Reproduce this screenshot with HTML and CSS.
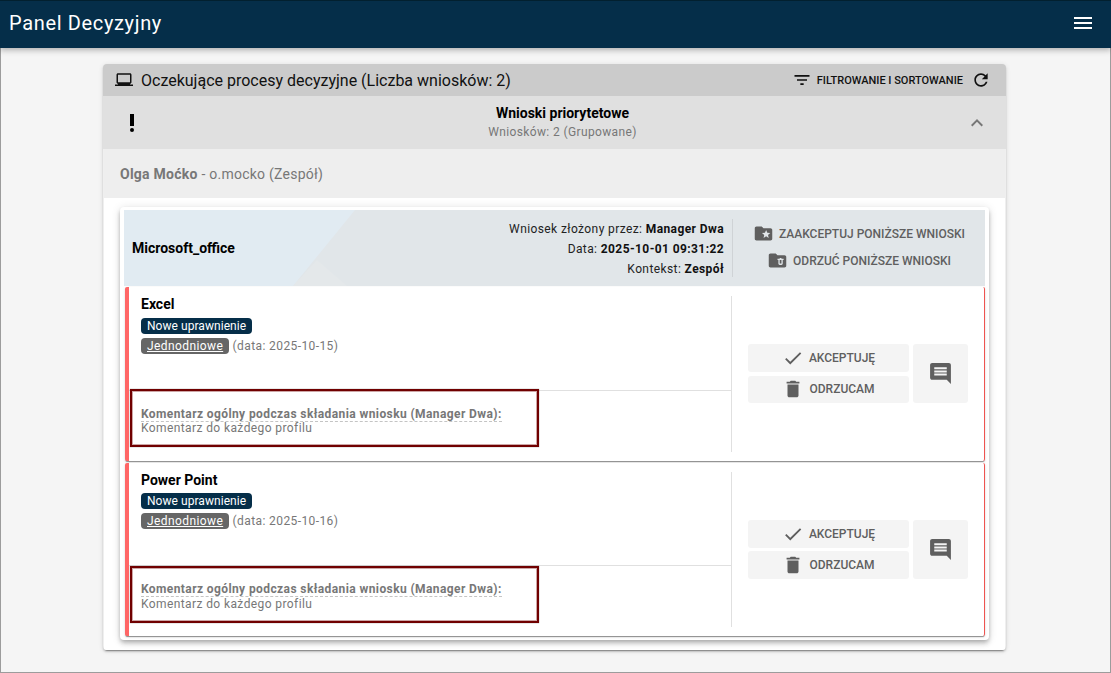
FILE: index.html
```html
<!DOCTYPE html>
<html lang="pl">
<head>
<meta charset="utf-8">
<title>Panel Decyzyjny</title>
<link rel="stylesheet" href="styles.css">
</head>
<body>
<div class="window">
  <header class="topbar">
    <span class="app-title">Panel Decyzyjny</span>
    <svg class="menu-icon" viewBox="0 0 24 24"><path d="M3 18h18v-2H3v2zm0-5h18v-2H3v2zm0-7v2h18V6H3z"/></svg>
  </header>
  <main class="content">
    <section class="panel">
      <div class="panel-head">
        <svg class="icon-18" viewBox="0 0 24 24"><path d="M20 18v-1c1.100 0 1.990-.9 1.990-2L22 5c0-1.100-.9-2-2-2H4c-1.100 0-2 .9-2 2v10c0 1.100.9 2 2 2v1H0v2h24v-2h-4zM4 5h16v10H4V5z"/></svg>
        <h1 class="panel-title">Oczekujące procesy decyzyjne (Liczba wniosków: 2)</h1>
        <svg class="icon-20 filter-icon" viewBox="0 0 24 24"><path d="M10 18h4v-2h-4v2zM3 6v2h18V6H3zm3 7h12v-2H6v2z"/></svg>
        <span class="filter-label">FILTROWANIE I SORTOWANIE</span>
        <svg class="icon-20 refresh-icon" viewBox="0 0 24 24"><path d="M17.650 6.350C16.200 4.900 14.210 4 12 4c-4.420 0-7.990 3.580-7.990 8s3.570 8 7.990 8c3.730 0 6.840-2.550 7.730-6h-2.080c-.82 2.330-3.040 4-5.650 4-3.310 0-6-2.690-6-6s2.690-6 6-6c1.660 0 3.140.69 4.220 1.780L13 11h7V4l-2.350 2.350z"/></svg>
      </div>
      <div class="priority">
        <svg class="priority-icon" viewBox="0 0 24 24"><circle cx="12" cy="19" r="2"/><path d="M10 3h4v12h-4z"/></svg>
        <div class="priority-text">
          <div class="priority-title">Wnioski priorytetowe</div>
          <div class="priority-sub">Wniosków: 2 (Grupowane)</div>
        </div>
        <svg class="chevron" viewBox="0 0 24 24"><path d="M12 8l-6 6 1.410 1.410L12 10.830l4.590 4.580L18 14z"/></svg>
      </div>
      <div class="person"><b>Olga Moćko</b> - o.mocko (Zespół)</div>
      <div class="panel-body">
        <div class="request">
          <div class="request-head">
            <div class="request-name">Microsoft_office</div>
            <div class="request-meta">
              <div>Wniosek złożony przez: <b>Manager Dwa</b></div>
              <div>Data: <b>2025-10-01 09:31:22</b></div>
              <div>Kontekst: <b>Zespół</b></div>
            </div>
            <div class="bulk">
              <button class="bulk-btn"><svg class="icon-21" viewBox="0 0 24 24"><path d="M20 6h-8l-2-2H4c-1.100 0-1.990.9-1.990 2L2 18c0 1.100.9 2 2 2h16c1.100 0 2-.9 2-2V8c0-1.100-.9-2-2-2zm-2.060 11L15 15.280 12.060 17l.78-3.330-2.590-2.240 3.410-.29L15 8l1.340 3.140 3.410.29-2.590 2.240.78 3.330z"/></svg>ZAAKCEPTUJ PONIŻSZE WNIOSKI</button>
              <button class="bulk-btn"><svg class="icon-21" viewBox="0 0 24 24"><path fill-rule="evenodd" d="M22 8v10c0 1.100-.9 2-2 2H4c-1.100 0-2-.9-2-2L2.010 6C2.010 4.900 2.900 4 4 4h6l2 2h8c1.100 0 2 .9 2 2zM16.500 10V9h-2v1H12v1.500h1v4c0 .83.67 1.500 1.500 1.500h2c.83 0 1.500-.67 1.500-1.500v-4h1V10h-2.500zM16.500 15.500h-2v-4h2v4z"/></svg>ODRZUĆ PONIŻSZE WNIOSKI</button>
            </div>
          </div>

          <article class="item">
            <div class="item-main">
              <div class="item-info">
                <div class="item-name">Excel</div>
                <div class="tag-row"><span class="tag tag-new">Nowe uprawnienie</span></div>
                <div class="tag-row"><span class="tag tag-once">Jednodniowe</span> <span class="tag-date">(data: 2025-10-15)</span></div>
              </div>
              <div class="item-comment">
                <div class="comment-box">
                  <div class="comment-label"><span>Komentarz ogólny podczas składania wniosku (Manager Dwa):</span></div>
                  <div class="comment-text">Komentarz do każdego profilu</div>
                </div>
              </div>
            </div>
            <div class="item-actions">
              <div class="decide">
                <button class="act-btn"><svg class="icon-22" viewBox="0 0 24 24"><path d="M9 16.200L4.800 12l-1.400 1.400L9 19 21 7l-1.400-1.400L9 16.200z"/></svg>AKCEPTUJĘ</button>
                <button class="act-btn"><svg class="icon-22" viewBox="0 0 24 24"><path d="M6 19c0 1.100.9 2 2 2h8c1.100 0 2-.9 2-2V7H6v12zM19 4h-3.500l-1-1h-5l-1 1H5v2h14V4z"/></svg>ODRZUCAM</button>
              </div>
              <button class="note-btn"><svg class="icon-25" viewBox="0 0 24 24"><path d="M21.990 4c0-1.100-.89-2-1.990-2H4c-1.100 0-2 .9-2 2v12c0 1.100.9 2 2 2h14l4 4-.01-18zM18 14H6v-2h12v2zm0-3H6V9h12v2zm0-3H6V6h12v2z"/></svg></button>
            </div>
          </article>

          <article class="item">
            <div class="item-main">
              <div class="item-info">
                <div class="item-name">Power Point</div>
                <div class="tag-row"><span class="tag tag-new">Nowe uprawnienie</span></div>
                <div class="tag-row"><span class="tag tag-once">Jednodniowe</span> <span class="tag-date">(data: 2025-10-16)</span></div>
              </div>
              <div class="item-comment">
                <div class="comment-box">
                  <div class="comment-label"><span>Komentarz ogólny podczas składania wniosku (Manager Dwa):</span></div>
                  <div class="comment-text">Komentarz do każdego profilu</div>
                </div>
              </div>
            </div>
            <div class="item-actions">
              <div class="decide">
                <button class="act-btn"><svg class="icon-22" viewBox="0 0 24 24"><path d="M9 16.200L4.800 12l-1.400 1.400L9 19 21 7l-1.400-1.400L9 16.200z"/></svg>AKCEPTUJĘ</button>
                <button class="act-btn"><svg class="icon-22" viewBox="0 0 24 24"><path d="M6 19c0 1.100.9 2 2 2h8c1.100 0 2-.9 2-2V7H6v12zM19 4h-3.500l-1-1h-5l-1 1H5v2h14V4z"/></svg>ODRZUCAM</button>
              </div>
              <button class="note-btn"><svg class="icon-25" viewBox="0 0 24 24"><path d="M21.990 4c0-1.100-.89-2-1.990-2H4c-1.100 0-2 .9-2 2v12c0 1.100.9 2 2 2h14l4 4-.01-18zM18 14H6v-2h12v2zm0-3H6V9h12v2zm0-3H6V6h12v2z"/></svg></button>
            </div>
          </article>
        </div>
      </div>
    </section>
  </main>
</div>
</body>
</html>
```
FILE: styles.css
```css
* { box-sizing: border-box; }
html, body { margin: 0; height: 100%; }
body { font-family: Roboto, "Liberation Sans", sans-serif; color: #000; background: #f5f5f5; overflow: hidden; }
svg { display: block; fill: currentColor; flex: none; }
button { font-family: inherit; border: 0; cursor: pointer; }

.window { width: 1111px; height: 673px; border: 1px solid #9c9c9c; border-top: 0; background: #f5f5f5; }

.topbar { height: 48px; margin: 0 -1px; padding: 0 16px 3px 9px; display: flex; align-items: center; justify-content: space-between; background: #052e49; border-top: 1px solid #02202f; color: #fff; box-shadow: 0 2px 6px rgba(0,0,0,.3); position: relative; }
.app-title { font-size: 20px; letter-spacing: .65px; }
.menu-icon { width: 24px; height: 24px; }

.content { padding: 16px 104px 0 102px; }
.panel { height: 586px; border-radius: 4px; background: #efefef; box-shadow: 0 3px 1px -2px rgba(0,0,0,.3), 0 2px 2px rgba(0,0,0,.14), 0 1px 5px rgba(0,0,0,.12); overflow: hidden; }
.panel-head { height: 32px; padding: 0 15px 0 12px; display: flex; align-items: center; background: #cbcbcb; color: #111; }
.icon-18 { width: 18px; height: 18px; }
.icon-20 { width: 20px; height: 20px; }
.icon-21 { width: 21px; height: 21px; }
.icon-22 { width: 22px; height: 22px; }
.icon-25 { width: 25px; height: 25px; }
.panel-title { flex: 1; margin: 0 0 0 8px; font-size: 16px; font-weight: 400; }
.filter-icon { margin-right: 5px; }
.filter-label { font-size: 11px; font-weight: 500; }
.refresh-icon { margin-left: 8px; }

.priority { height: 53px; padding: 0 17px; display: flex; align-items: center; background: #e0e0e0; }
.priority-icon { width: 24px; height: 24px; }
.priority-text { flex: 1; text-align: center; padding-left: 16px; }
.priority-title { font-size: 14px; font-weight: 700; line-height: 19px; }
.priority-sub { font-size: 12px; line-height: 19px; color: #777; letter-spacing: .37px; }
.chevron { width: 24px; height: 24px; color: #777; }

.person { height: 49px; margin: 0 1px; padding: 0 16px; display: flex; align-items: center; background: #eee; color: #777; font-size: 14px; letter-spacing: .25px; white-space: pre; }
.person b { font-weight: 700; }

.panel-body { height: 452px; margin: 0 1px; padding: 9px 16px 0; background: #fff; }
.request { height: 433px; padding: 3px 4px; border-radius: 4px; background: #fff; box-shadow: 0 2px 4px -1px rgba(0,0,0,.2), 0 4px 5px rgba(0,0,0,.14), 0 1px 10px rgba(0,0,0,.12); }
.request-head { height: 76px; padding: 9px 0 9px 8px; display: flex; align-items: center; position: relative; overflow: hidden; background: #e1ebf2; }
.request-head::before { content: ""; position: absolute; inset: 0; background: #e1e6e9; clip-path: polygon(231px 0, 100% 0, 100% 100%, 169px 100%); }
.request-head::after { content: ""; position: absolute; inset: 0; background: #e4e8ea; clip-path: polygon(193px 50px, 223px 76px, 169px 76px); }
.request-name { position: relative; z-index: 1; flex: 1; font-size: 14px; font-weight: 700; }
.request-meta { position: relative; z-index: 1; padding-right: 8px; height: 58px; text-align: right; font-size: 12px; line-height: 20px; letter-spacing: .4px; color: #222; }
.request-meta b { font-weight: 700; color: #111; }
.bulk { position: relative; z-index: 1; width: 253px; height: 58px; padding-bottom: 2px; border-left: 1px solid #cfd3d6; display: flex; flex-direction: column; align-items: center; justify-content: center; gap: 7px; }
.bulk-btn { height: 20px; padding: 0; display: flex; align-items: center; gap: 5px; background: transparent; color: #5f5f5f; font-size: 12px; font-weight: 500; }

.item { height: 174px; margin: 1px 0 2px 1px; padding: 9px 0; display: flex; background: #fff; border-left: 4px solid #ff6666; border-right: 1px solid #ef5350; border-radius: 2px; box-shadow: 0 2px 1px -1px rgba(0,0,0,.3), 0 1px 1px rgba(0,0,0,.14), 0 1px 3px rgba(0,0,0,.12); }
.item + .item { height: 173px; margin-bottom: 0; }
.item-main { width: 603px; border-right: 1px solid #e0e0e0; display: flex; flex-direction: column; }
.item-info { height: 94px; padding-left: 12px; }
.item + .item .item-info { height: 93px; }
.item-name { font-size: 14px; font-weight: 700; line-height: 17px; margin-bottom: 5px; }
.item + .item .item-name { margin-bottom: 4px; }
.tag-row { height: 20px; font-size: 12px; letter-spacing: .4px; }
.tag { display: inline-block; height: 16px; padding: 0 6px; border-radius: 4px; color: #fff; line-height: 16px; }
.tag-new { background: #052e49; letter-spacing: .05px; }
.tag-once { background: #666; text-decoration: underline; }
.tag-date { color: #777; }
.item-comment { border-top: 1px solid #e0e0e0; }
.comment-box { width: 409px; height: 58px; margin: -2px 0 0 1px; padding: 16px 0 0 9px; border: 2px solid #700000; box-shadow: inset 0 0 0 1px rgba(112,0,0,.35), 0 0 1px rgba(0,0,0,.5); background: #fff; font-size: 12px; line-height: 14px; letter-spacing: .4px; color: #777; }
.item + .item .comment-box { height: 57px; margin-top: 0; padding-top: 14px; }
.item + .item .comment-text { margin-top: 1px; }
.comment-label span { font-weight: 700; border-bottom: 1px dashed #c4c4c4; }
.item-actions { flex: 1; padding: 0 0 2px 16px; display: flex; align-items: center; gap: 4px; }
.item + .item .item-actions { padding-bottom: 0; }
.decide { width: 161px; display: flex; flex-direction: column; gap: 4px; }
.item + .item .decide { gap: 3px; }
.act-btn { height: 28px; padding: 0; display: flex; align-items: center; justify-content: center; gap: 5px; border-radius: 3px; background: #f4f4f4; color: #5f5f5f; font-size: 12px; font-weight: 500; }
.act-btn + .act-btn { height: 27px; }
.item + .item .act-btn + .act-btn { height: 28px; }
.note-btn { width: 55px; height: 59px; padding: 0; display: flex; align-items: center; justify-content: center; border-radius: 3px; background: #f4f4f4; color: #5f5f5f; }
```
